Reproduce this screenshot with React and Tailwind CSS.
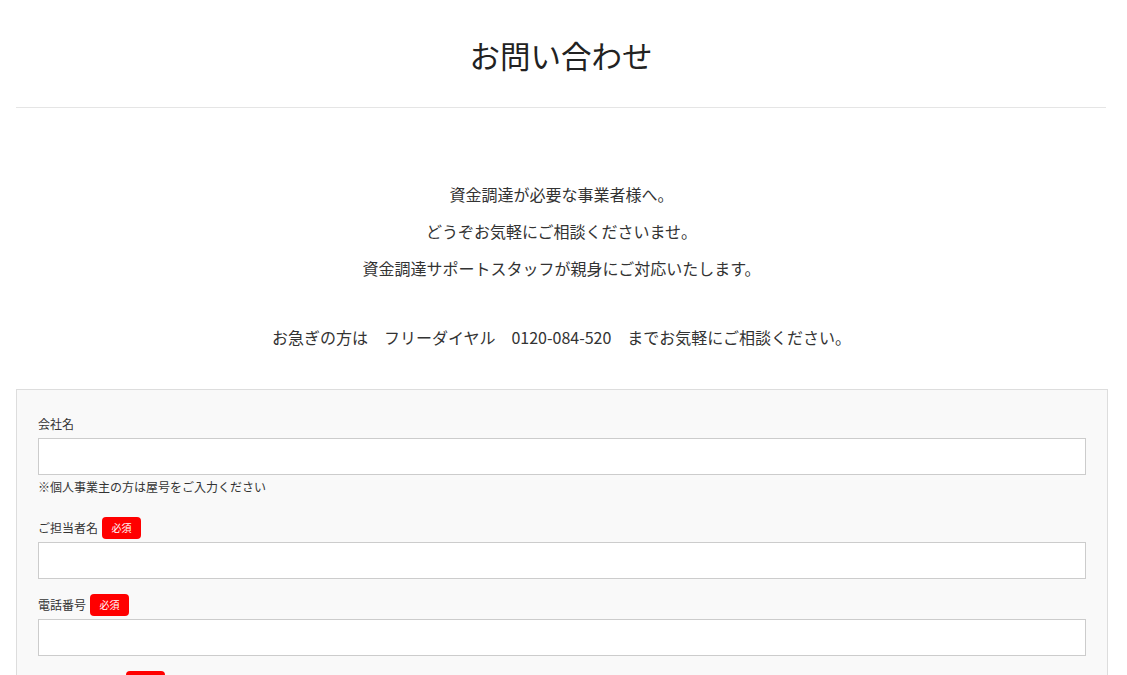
import React from 'react'

const Badge = () => (
  <span className="ml-[4px] inline-flex h-[22px] w-[39px] items-center justify-center rounded-[4px] bg-[#ff0000] text-[10px] leading-none text-white">
    必須
  </span>
)

const Field = ({ label, required, note }) => (
  <div className="mb-[15px]">
    <div className="flex h-[22px] items-center text-[12px] text-[#333]">
      {label}
      {required && <Badge />}
    </div>
    <input
      type="text"
      className="mt-[3px] block h-[37px] w-full border border-[#ccc] bg-white px-2 text-[14px] outline-none"
    />
    {note && (
      <div className="mt-[3px] text-[12px] leading-[18px] text-[#333]">{note}</div>
    )}
  </div>
)

export default function App() {
  return (
    <div
      className="min-h-screen bg-white text-[#333]"
      style={{ fontFamily: '"Noto Sans CJK JP", "Noto Sans", sans-serif' }}
    >
      {/* header */}
      <div className="ml-4 mr-[21px] border-b border-[#e5e5e5] pt-[33px] pb-[29px] text-center">
        <h1 className="text-[30.5px] leading-[45px] text-[#222]">お問い合わせ</h1>
      </div>

      {/* intro */}
      <div className="mr-[4px] pt-[68px] text-center text-[16px] leading-[37px] text-[#333]">
        <p>資金調達が必要な事業者様へ。</p>
        <p>どうぞお気軽にご相談くださいませ。</p>
        <p>資金調達サポートスタッフが親身にご対応いたします。</p>
        <p className="mt-[32px]">
          お急ぎの方は　フリーダイヤル　0120-084-520　までお気軽にご相談ください。
        </p>
      </div>

      {/* form */}
      <div className="ml-4 mr-[19px] mt-[33px] border border-[#ddd] bg-[#f9f9f9] px-[21px] pt-[23px] pb-4">
        <Field label="会社名" note="※個人事業主の方は屋号をご入力ください" />
        <div className="h-[6px]" />
        <Field label="ご担当者名" required />
        <Field label="電話番号" required />
        <Field label="メールアドレス" required />
      </div>
    </div>
  )
}
